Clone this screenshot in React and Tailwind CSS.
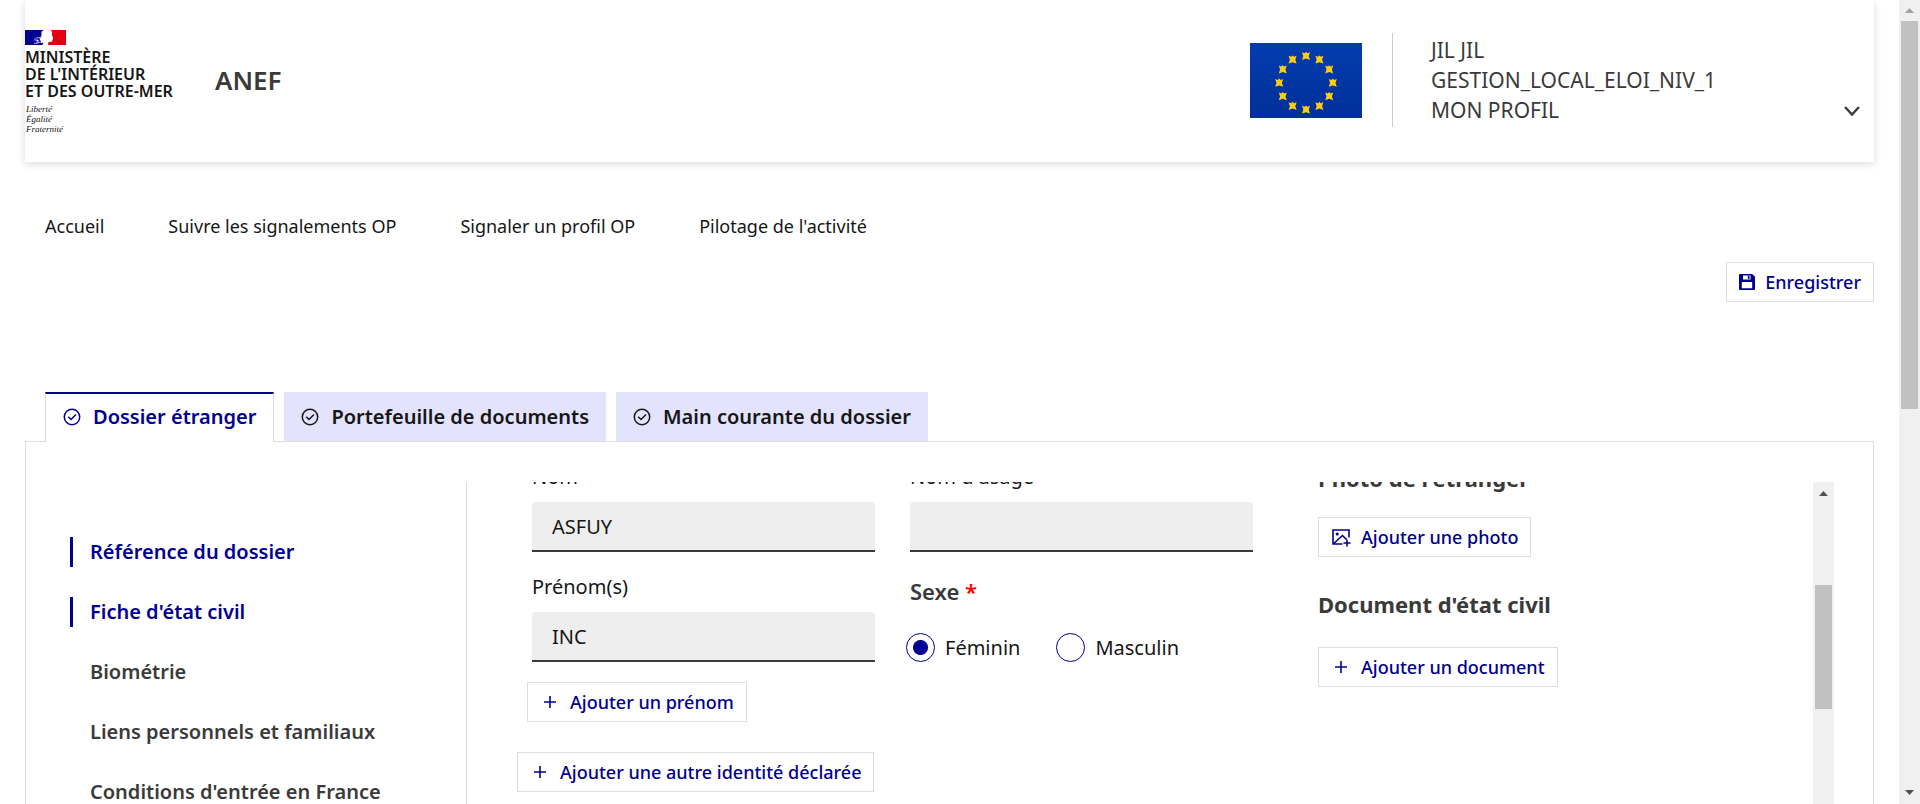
import { useState } from "react";

const NAV = ["Accueil", "Suivre les signalements OP", "Signaler un profil OP", "Pilotage de l'activité"];
const TABS = ["Dossier étranger", "Portefeuille de documents", "Main courante du dossier"];
const SECTIONS = [
  { label: "Référence du dossier", active: true },
  { label: "Fiche d'état civil", active: true },
  { label: "Biométrie" },
  { label: "Liens personnels et familiaux" },
  { label: "Conditions d'entrée en France" },
];
const STARS = Array.from({ length: 12 }, (_, i) => (i * Math.PI) / 6);

function CheckCircleIcon() {
  return (
    <svg viewBox="0 0 18 18" className="size-[18px] shrink-0" fill="none" stroke="currentColor" strokeWidth="1.5" aria-hidden="true">
      <circle cx="9" cy="9" r="7.7" />
      <path d="M5.2 8.7 8 11.5l5-5" />
    </svg>
  );
}

function PlusIcon() {
  return (
    <svg viewBox="0 0 20 20" className="size-5 shrink-0" fill="none" stroke="currentColor" strokeWidth="1.6" aria-hidden="true">
      <path d="M10 4v12M4 10h12" />
    </svg>
  );
}

function SaveIcon() {
  return (
    <svg viewBox="0 0 16 16" className="size-4 shrink-0" fill="currentColor" aria-hidden="true">
      <path fillRule="evenodd" d="M1 0h12.3L16 2.7V15a1 1 0 0 1-1 1H1a1 1 0 0 1-1-1V1a1 1 0 0 1 1-1Zm1.8 8v6.2h10.4V8H2.8ZM4 1.4v4h7.6v-4H4Z" />
      <path d="M8.8 1.8h1.8v3H8.8z" />
    </svg>
  );
}

function ImageAddIcon() {
  return (
    <svg viewBox="0 0 20 20" className="size-5 shrink-0" fill="none" stroke="currentColor" strokeWidth="1.6" aria-hidden="true">
      <path d="M11.500 17H2V3h16v7.500M2.800 16.500l8.600-8 4 3.800M16 12.500v7M12.500 16h7" />
      <circle cx="6.200" cy="7" r="1.600" fill="currentColor" stroke="none" />
    </svg>
  );
}

function RepublicFlag() {
  return (
    <svg viewBox="0 0 41 15" className="h-[15px] w-[41px]" aria-hidden="true">
      <path fill="#fff" d="M0 0h41v15H0z" />
      <path fill="#000091" d="M0 0h18.5l-1 1.2-1.3.6.4.9-.4 1.4.6.8-1.3 1.8.9.6-.2 1.300 1 .8 1 1.200-.4 2 .6 1L17 15H0z" />
      <path fill="#e1000f" d="M41 0H25.800l.9 1.300.4 2-.3 1.700 1 1.400.2 2.300-.8 1.800.3 1-3 .4-1.600.9.400 1.200-.5 1H41z" />
      <path fill="none" stroke="#fff" strokeWidth=".7" d="M9 10.500c1.400-2.200 3-3 6.600-2.800M9 13.200c2.200.6 3.400.2 4.800-.6s2.200-.6 3.400.2M10.400 10.700c1.200-1 2.600-1 3.800.200M11 12c1 .4 2 .4 3-.4" />
      <circle cx="12.400" cy="10.800" r=".8" fill="#fff" />
      <path fill="#fff" d="m14.600 8 3.400-1v5.500l-2.400.5.700-1.800-1.300-1z" />
    </svg>
  );
}

function EuropeFlag() {
  return (
    <svg viewBox="0 0 112 75" className="h-[75px] w-28 shrink-0" role="img" aria-label="Union européenne">
      <defs>
        <linearGradient id="eu-blue" x1="0" y1="0" x2="0" y2="1">
          <stop offset="0" stopColor="#043cae" />
          <stop offset="1" stopColor="#00309a" />
        </linearGradient>
      </defs>
      <path fill="url(#eu-blue)" d="M0 0h112v75H0z" />
      {STARS.map((a) => (
        <path
          key={a}
          fill="#ffcc14"
          transform={`translate(${56 + 26.8 * Math.sin(a)} ${40 - 26.8 * Math.cos(a)})`}
          d="M-4-4-1.400-3 0-4.400 1.400-3 4-4 2.700 0 4 3.800 0 2.400-4 3.800-2.700 0Z"
        />
      ))}
    </svg>
  );
}

function ActionButton({ icon, children, className = "" }) {
  return (
    <button type="button" className={`flex h-10 items-center gap-[10px] border border-[#ddd] bg-white px-3 text-lg font-medium whitespace-nowrap text-[#000091] ${className}`}>
      {icon}
      {children}
    </button>
  );
}

function Field({ id, label, value }) {
  return (
    <div className="flex flex-col gap-[11px]">
      <label htmlFor={id} className="text-xl leading-7">{label}</label>
      <input id={id} type="text" defaultValue={value} className="h-[50px] w-full rounded-t border-b-2 border-[#3a3a3a] bg-[#eee] px-5 text-xl outline-none" />
    </div>
  );
}

function Radio({ label, checked, onChange }) {
  return (
    <label className="flex items-center gap-[10px] text-xl leading-7">
      <input
        type="radio"
        name="sexe"
        checked={checked}
        onChange={onChange}
        className="size-[29px] appearance-none rounded-full border border-[#000091] bg-white checked:bg-[radial-gradient(circle,#000091_7px,transparent_8px)]"
      />
      {label}
    </label>
  );
}

function Arrow({ down, className }) {
  return (
    <svg viewBox="0 0 9 5" className={`h-[5px] w-[9px] ${className}`} fill="currentColor" aria-hidden="true">
      <path d={down ? "M0 0h9L4.500 5z" : "M0 5h9L4.500 0z"} />
    </svg>
  );
}

export default function App() {
  const [tab, setTab] = useState(0);
  const [sexe, setSexe] = useState("F");

  return (
    <div className="flex h-screen bg-white font-['Noto_Sans',sans-serif] text-[#161616]">
      <div className="flex min-w-0 flex-1 flex-col overflow-hidden px-[25px]">
        <header className="flex h-[162px] shrink-0 items-center bg-white pb-[2px] shadow-[0_2px_8px_rgba(0,0,0,0.14)]">
          <div className="w-[190px] pt-1">
            <RepublicFlag />
            <p className="pt-1 text-base leading-[17px] font-semibold whitespace-nowrap">
              MINISTÈRE
              <br />
              DE L'INTÉRIEUR
              <br />
              ET DES OUTRE-MER
            </p>
            <p className="pt-1 pl-px font-['Liberation_Serif',serif] text-[9px] leading-[10px] italic">
              Liberté
              <br />
              Égalité
              <br />
              Fraternité
            </p>
          </div>
          <p className="text-[26px] leading-8 font-semibold text-[#3a3a3a]">ANEF</p>
          <div className="ml-auto flex items-center gap-[30px]">
            <EuropeFlag />
            <div className="h-[94px] w-px bg-[#ccc]" />
            <button type="button" className="flex w-[451px] items-end justify-between pr-3 pl-2 text-left text-[21px] leading-[30px] text-[#3a3a3a]">
              <span>
                JIL JIL
                <br />
                GESTION_LOCAL_ELOI_NIV_1
                <br />
                MON PROFIL
              </span>
              <svg viewBox="0 0 20 20" className="mb-1 size-5" fill="none" stroke="currentColor" strokeWidth="2.4" aria-hidden="true">
                <path d="m3 6 7 7.500L17 6" />
              </svg>
            </button>
          </div>
        </header>

        <nav className="flex shrink-0 gap-16 px-5 pt-[50px] text-lg leading-7">
          {NAV.map((item) => (
            <a key={item} href="#" className="whitespace-nowrap">{item}</a>
          ))}
        </nav>

        <div className="flex shrink-0 justify-end pt-[22px]">
          <ActionButton icon={<SaveIcon />}>Enregistrer</ActionButton>
        </div>

        <div role="tablist" className="z-10 -mb-px flex shrink-0 gap-[10px] px-5 pt-[90px]">
          {TABS.map((label, i) => (
            <button
              key={label}
              type="button"
              role="tab"
              aria-selected={tab === i}
              onClick={() => setTab(i)}
              className={`flex items-center gap-3 px-[17px] text-xl font-semibold whitespace-nowrap ${
                tab === i ? "h-[50px] border-x border-t-2 border-x-[#ddd] border-t-[#000091] bg-white pb-[2px] text-[#000091]" : "h-[49px] bg-[#e3e3fd]"
              }`}
            >
              <CheckCircleIcon />
              {label}
            </button>
          ))}
        </div>

        <main className="flex min-h-0 flex-1 border border-b-0 border-[#ddd] pt-10 pr-[39px]">
          <nav className="w-[441px] shrink-0 overflow-hidden border-r border-[#ddd] pt-[55px] pl-11">
            <ul className="flex flex-col gap-[30px]">
              {SECTIONS.map((s) => (
                <li key={s.label}>
                  <a
                    href="#"
                    className={`block border-l-[3px] pl-[17px] text-xl leading-[30px] font-semibold whitespace-nowrap ${
                      s.active ? "border-[#000091] text-[#000091]" : "border-transparent text-[#3a3a3a]"
                    }`}
                  >
                    {s.label}
                  </a>
                </li>
              ))}
            </ul>
          </nav>

          <div className="flex min-w-0 flex-1 items-start overflow-hidden pl-[50px]">
            <form className="-mt-[19px] flex min-w-0 flex-1 flex-col items-start">
              <div className="grid w-full grid-cols-2 gap-x-[35px] gap-y-[21px] pr-[65px] pl-[15px]">
                <Field id="nom" label="Nom" value="ASFUY" />
                <Field id="usage" label="Nom d'usage" value="" />
                <Field id="prenom" label="Prénom(s)" value="INC" />
                <fieldset>
                  <legend className="pt-1 text-[22px] leading-7 font-semibold text-[#3a3a3a]">
                    Sexe <span className="text-[#f00]">*</span>
                  </legend>
                  <div className="-ml-1 flex gap-9 pt-7">
                    <Radio label="Féminin" checked={sexe === "F"} onChange={() => setSexe("F")} />
                    <Radio label="Masculin" checked={sexe === "M"} onChange={() => setSexe("M")} />
                  </div>
                </fieldset>
              </div>
              <ActionButton icon={<PlusIcon />} className="mt-5 ml-[10px]">Ajouter un prénom</ActionButton>
              <ActionButton icon={<PlusIcon />} className="mt-[30px]">Ajouter une autre identité déclarée</ActionButton>
            </form>
            <section className="-mt-[19px] flex w-[495px] shrink-0 flex-col items-start text-[22px] leading-[30px] font-bold text-[#3a3a3a]">
              <h2>Photo de l'étranger</h2>
              <ActionButton icon={<ImageAddIcon />} className="mt-6">Ajouter une photo</ActionButton>
              <h2 className="pt-8">Document d'état civil</h2>
              <ActionButton icon={<PlusIcon />} className="mt-7">Ajouter un document</ActionButton>
            </section>
          </div>

          <div className="flex w-[21px] shrink-0 flex-col items-center bg-[#f0f0f0] text-[#505050]" aria-hidden="true">
            <Arrow className="mt-[9px] shrink-0" />
            <div className="mt-[89px] h-[124px] w-[17px] bg-[#c1c1c1]" />
          </div>
        </main>
      </div>

      <div className="flex w-[21px] shrink-0 flex-col items-center bg-[#f0f0f0]" aria-hidden="true">
        <Arrow className="my-2 shrink-0 text-[#a3a3a3]" />
        <div className="h-[388px] w-[17px] bg-[#c1c1c1]" />
        <Arrow down className="mt-auto mb-[9px] shrink-0 text-[#505050]" />
      </div>
    </div>
  );
}
